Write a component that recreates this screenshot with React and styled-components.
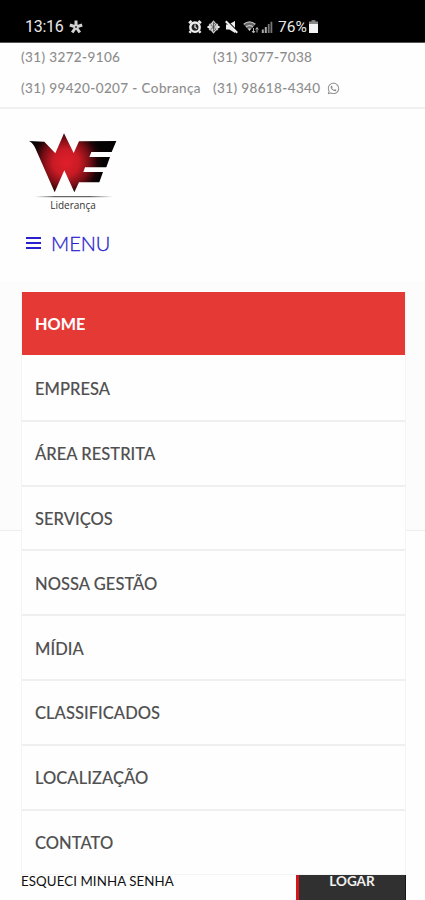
import styled, { createGlobalStyle, css } from "styled-components";
import { FaWhatsapp } from "react-icons/fa";

const menuItems = [
  "Home",
  "Empresa",
  "Área Restrita",
  "Serviços",
  "Nossa Gestão",
  "Mídia",
  "Classificados",
  "Localização",
  "Contato",
];

export default function App() {
  return (
    <>
      <GlobalStyle />
      <Page>
        <StatusBar />
        <Contacts>
          <Phone>(31) 3272-9106</Phone>
          <Phone>(31) 3077-7038</Phone>
          <Phone>(31) 99420-0207 - Cobrança</Phone>
          <Phone>
            (31) 98618-4340 <FaWhatsapp size={13} />
          </Phone>
        </Contacts>
        <Header>
          <Logo />
          <MenuButton>
            <Bars>
              <i />
              <i />
              <i />
            </Bars>
            MENU
          </MenuButton>
          <Menu>
            {menuItems.map((item, i) => (
              <MenuItem key={item} $active={i === 0}>
                {item}
              </MenuItem>
            ))}
          </Menu>
        </Header>
        <Banner />
        <LoginRow>
          <Forgot>Esqueci minha senha</Forgot>
          <LoginButton>Logar</LoginButton>
        </LoginRow>
      </Page>
    </>
  );
}

function StatusBar() {
  return (
    <Status>
      <Clock>13:16</Clock>
      <svg width="14" height="14" viewBox="0 0 14 14" fill="none" stroke="#d2d2d2" strokeWidth="3">
        <path d="M7 7V0.5M7 7L0.8 5M7 7l6.2-2M7 7l-3.8 5.5M7 7l3.8 5.5" />
        <circle cx="7" cy="7" r="0.9" fill="#222" stroke="none" />
      </svg>
      <StatusIcons>
        <svg width="14" height="14" viewBox="0 0 14 14">
          <path d="M1 3.2L3.6 1M13 3.2L10.4 1M2.8 11.2L1.5 12.8M11.2 11.2l1.3 1.6" stroke="#eee" strokeWidth="2.4" />
          <circle cx="7" cy="7.2" r="4.7" fill="#222" stroke="#eee" strokeWidth="2.4" />
          <path d="M7 4.5v3l2 1" fill="none" stroke="#eee" strokeWidth="1.2" />
        </svg>
        <svg width="13" height="14" viewBox="0 0 13 14">
          <path d="M6.5 0.3L12 7l-5.5 6.7L1 7z" fill="#ccc" />
          <path d="M2.2 4.2l2 1.5M2.2 9.8l2-1.5M10.8 4.2l-2 1.5M10.8 9.8l-2-1.5" stroke="#ccc" strokeWidth="2.6" />
          <path d="M3.8 4.5l5 4.7-2.3 2.2V2.6l2.3 2.2-5 4.7" fill="none" stroke="#444" strokeWidth="0.8" />
          <path d="M0.5 7h2.2M10.4 7h2.2" stroke="#eee" strokeWidth="2" />
        </svg>
        <svg width="13" height="14" viewBox="0 0 13 14">
          <path d="M1 4.5h2.6L10 1v12L4.4 9.6H1z" fill="#eee" />
          <path d="M1.5 0.5l12 12" stroke="#000" strokeWidth="1.6" />
          <path d="M0.8 1.3l11.4 11.4" stroke="#eee" strokeWidth="2" />
        </svg>
        <svg width="16" height="14" viewBox="0 0 16 14">
          <path d="M0.5 4.2Q6.5-0.5 12.5 4.2L6.5 11z" fill="#666" />
          <path d="M0.7 4.2Q6.5-0.5 12.3 4.2M3 7q3.5-3 7 0" fill="none" stroke="#bbb" strokeWidth="1.3" />
          <path d="M5 8.5h3L6.5 11z" fill="#ddd" />
          <path d="M10.5 8v4.5M9 11l1.5 2 1.5-2M14 12.5V8M12.7 9.5L14 7.5l1.3 2" fill="none" stroke="#bbb" />
        </svg>
        <svg width="12" height="14" viewBox="0 0 12 14">
          <path d="M0.8 9.5h2V13h-2zM3.8 7h2v6h-2z" fill="#aaa" />
          <path d="M6.8 4h1.8v9H6.8zM9.5 1.8h1.8V13H9.5z" fill="#777" />
        </svg>
      </StatusIcons>
      <Battery>76%</Battery>
      <svg width="9" height="13" viewBox="0 0 9 13">
        <path d="M2.5 0h4v2h-4z" fill="#777" />
        <path d="M0 1.5h9V4H0z" fill="#888" />
        <path d="M0 4h9v9H0z" fill="#f4f4f4" />
      </svg>
    </Status>
  );
}

function Logo() {
  return (
    <Brand>
      <svg width="90" height="65" viewBox="0 0 270 195">
        <defs>
          <radialGradient id="glow" gradientUnits="userSpaceOnUse" cx="120" cy="88" r="112">
            <stop offset="0" stopColor="#e01f2a" />
            <stop offset="0.35" stopColor="#c91b25" />
            <stop offset="0.62" stopColor="#7c0e16" />
            <stop offset="0.85" stopColor="#1c0406" />
            <stop offset="1" stopColor="#050203" />
          </radialGradient>
          <linearGradient id="rule" gradientUnits="userSpaceOnUse" x1="26" x2="262" y1="0" y2="0">
            <stop offset="0" stopColor="#777" stopOpacity="0" />
            <stop offset="0.25" stopColor="#666" />
            <stop offset="0.7" stopColor="#666" />
            <stop offset="1" stopColor="#777" stopOpacity="0" />
          </linearGradient>
        </defs>
        <path
          d="M9 24L55 26L88 61L114 1L143 60L159 25L271 24L257 57L196 57L190 72L252 72L241 103L177 103L172 117L231 117L220 148L159 148L145 178L115 112L86 178L28 46Q22 31 9 24Z"
          fill="url(#glow)"
        />
        <path d="M26 189h236v4H26z" fill="url(#rule)" />
      </svg>
      <BrandName>Liderança</BrandName>
    </Brand>
  );
}

const GlobalStyle = createGlobalStyle`
  * {
    box-sizing: border-box;
  }

  body {
    margin: 0;
    background: #fff;
    font-family: Lato, "Liberation Sans", sans-serif;
    overflow: hidden;
  }
`;

const Page = styled.div`
  height: 900px;
  overflow: hidden;
  background: #fefefe;
`;

const Status = styled.div`
  display: flex;
  align-items: center;
  height: 43px;
  padding: 11px 0 0 25px;
  background: #000;
  border-bottom: 1px solid #555;
  color: #e8e8e8;
  font-family: Roboto, sans-serif;
  font-size: 16px;
`;

const Clock = styled.span`
  width: 44px;
  letter-spacing: -0.3px;
`;

const StatusIcons = styled.div`
  display: flex;
  align-items: center;
  gap: 5px;
  margin-left: 105px;

  svg:last-child {
    margin-left: -3px;
  }
`;

const Battery = styled.span`
  width: 31px;
  margin-left: 5px;
  font-size: 15.5px;
  letter-spacing: 0.1px;
`;

const Contacts = styled.div`
  display: grid;
  grid-template-columns: 192px 1fr;
  grid-template-rows: 31px 31px;
  height: 66px;
  padding: 0 0 0 21px;
  border-bottom: 2px solid #f0f0f0;
`;

const Phone = styled.span`
  display: flex;
  align-items: center;
  gap: 6px;
  height: 28px;
  color: #8c8c8c;
  font-size: 13.5px;
  letter-spacing: 0.38px;
  white-space: nowrap;
  -webkit-text-stroke: 0.1px;
`;

const Header = styled.header`
  position: relative;
  height: 172px;
  padding: 24px 22px 0;
`;

const Brand = styled.div`
  display: flex;
  flex-direction: column;
  width: 102px;
  padding-left: 4px;

  svg {
    overflow: visible;
  }
`;

const BrandName = styled.span`
  padding-right: 4px;
  color: #333;
  font-family: "Open Sans", sans-serif;
  font-size: 10px;
  line-height: 14px;
  text-align: center;
`;

const MenuButton = styled.div`
  display: flex;
  align-items: center;
  gap: 10px;
  height: 24px;
  margin: 19px 0 0 4px;
  color: #2921cf;
  font-size: 20px;
  font-weight: 300;
  -webkit-text-stroke: 0.3px;
`;

const Bars = styled.span`
  display: flex;
  flex-direction: column;
  gap: 3px;

  i {
    width: 15px;
    height: 2px;
    background: #2921cf;
  }
`;

const Menu = styled.nav`
  position: absolute;
  z-index: 1;
  top: 183px;
  left: 21px;
  width: 385px;
  background: #fefefe;
  border: solid #f4f4f4;
  border-width: 0 1px;
`;

const MenuItem = styled.div`
  display: flex;
  align-items: center;
  height: 64.85px;
  padding: 2px 13px 0;
  border-bottom: 2px solid #efefef;
  color: #505050;
  font-size: 16.5px;
  font-weight: 500;
  letter-spacing: 0.05px;
  -webkit-text-stroke: 0.1px;
  text-transform: uppercase;

  &:last-child {
    height: 64px;
    padding-top: 1px;
    border-bottom: 1px solid #f4f4f4;
  }

  ${({ $active }) =>
    $active &&
    css`
      background: #e53935;
      background-clip: padding-box;
      padding: 1px 13px 0;
      border-bottom-color: #fefefe;
      color: #fff;
      font-size: 16.2px;
      font-weight: 700;
    `}
`;

const Banner = styled.section`
  height: 250px;
  background: #fcfcfc;
  border-bottom: 1px solid #ededed;
`;

const LoginRow = styled.div`
  display: flex;
  justify-content: space-between;
  margin-top: 334px;
  padding: 0 19px 0 21px;
`;

const Forgot = styled.span`
  padding-top: 8px;
  color: #111;
  font-size: 13.3px;
  line-height: 16px;
  letter-spacing: 0.08px;
  text-transform: uppercase;
`;

const LoginButton = styled.button`
  width: 110px;
  height: 50px;
  padding: 8px 0 0;
  border: 0;
  border-left: 3px solid #d3161b;
  border-right: 1px solid #161616;
  background: #303030;
  color: #f1f1f1;
  font-family: inherit;
  font-size: 13.5px;
  font-weight: 700;
  line-height: 16px;
  text-transform: uppercase;
  display: flex;
  justify-content: center;
`;
